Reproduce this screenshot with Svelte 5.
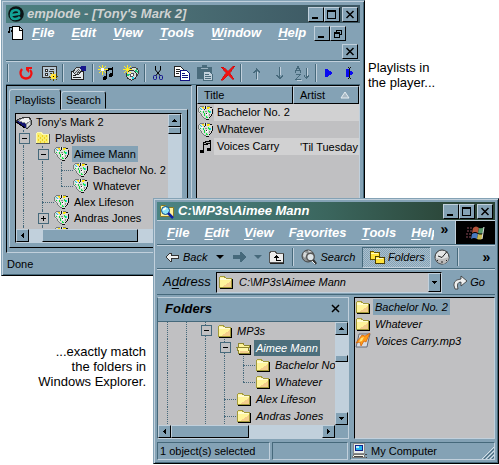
<script>
  const playlists = [
    { g: '', icon: 'device', text: "Tony's Mark 2" },
    { g: 'm', icon: 'yfolder', text: 'Playlists' },
    { g: 'vm', icon: 'discs', text: 'Aimee Mann', sel: true },
    { g: 'vvt', icon: 'discs', text: 'Bachelor No. 2' },
    { g: 'vvl', icon: 'discs', text: 'Whatever' },
    { g: 'vt', icon: 'discs', text: 'Alex Lifeson' },
    { g: 'vp', icon: 'discs', text: 'Andras Jones' },
    { g: 'vt', icon: 'discs', text: '' }
  ];
  const folders = [
    { g: 'vvm', icon: 'folder', text: 'MP3s' },
    { g: 'vvvm', icon: 'open', text: 'Aimee Mann', sel: true },
    { g: 'vvvvt', icon: 'folder', text: 'Bachelor No. 2' },
    { g: 'vvvvl', icon: 'folder', text: 'Whatever' },
    { g: 'vvvt', icon: 'folder', text: 'Alex Lifeson' },
    { g: 'vvvt', icon: 'folder', text: 'Andras Jones' }
  ];
  const tracks = [
    { icon: 'discs', title: 'Bachelor No. 2', artist: '' },
    { icon: 'discs', title: 'Whatever', artist: '' },
    { icon: 'notes', title: 'Voices Carry', artist: "'Til Tuesday" }
  ];
  const files = [
    { icon: 'folder', text: 'Bachelor No. 2', sel: true },
    { icon: 'folder', text: 'Whatever' },
    { icon: 'mp3', text: 'Voices Carry.mp3' }
  ];
  const tools = [
    ['undo', 'Synchronise', 23], ['config', 'Configure', 25], 'sep', ['props', 'Properties', 28], 'sep',
    ['newtune', 'New tune', 23], ['newlist', 'New playlist', 27], 'sep', ['cut', 'Cut', 24], ['copy', 'Copy', 23],
    ['paste', 'Paste', 23], ['del', 'Delete', 24], 'sep', ['up', 'Up', 27], ['down', 'Down', 20], ['sort', 'Sort', 26],
    'sep', ['play', 'Play', 23], ['playto', 'Play from here', 18]
  ];
  const smooth = ['undo', 'mp3', 'emplode', 'search', 'history', 'go', 'finder', 'cut'];
  let address = $state('C:\\MP3s\\Aimee Mann');
</script>

{#snippet icon(name)}
  <svg class="ic" viewBox="0 0 16 16" width="16" height="16" aria-hidden="true" shape-rendering={smooth.includes(name) ? 'auto' : 'crispEdges'}>
    {#if name === 'folder'}
      <path d="M1.500 3.500l1-1h4l1 2h6v9h-12z" fill="#fff49a" stroke="#a39a3a" />
      <path d="M2 4h5l1 1h5v1h-11z" fill="#fffbd0" />
      <path d="M13 7v6h-9z" fill="#f5ce8c" /><path d="M14.500 5v9.500H2" fill="none" stroke="#000" />
    {:else if name === 'open'}
      <path d="M2 13V3h5l1 2h5v3" fill="#fff49a" stroke="#8f8630" />
      <path d="M1 7.500h11l2 6H3z" fill="#fff7a8" stroke="#8f8630" />
      <path d="M4 11h8l1 2H4z" fill="#f5ce8c" /><path d="M14.500 5v9.500H3" fill="none" stroke="#000" />
    {:else if name === 'yfolder'}
      <path d="M1.500 3.500l1-1h4l1 2h6v9h-12z" fill="#f8ee70" stroke="#fdf9b0" />
      <path d="M3 6h1M7 6h1M11 6h1M5 8h1M9 8h1M3 10h1M7 10h1M11 10h1M5 12h1M9 12h1" stroke="#f0d020" stroke-width="2" />
      <path d="M14.500 4v9.500H1" fill="none" stroke="#555" />
    {:else if name === 'discs'}
      <path d="M3 1h9v1h2v2h1v5h-1v2h-2v2h-1v1H7v-1H5v-2H3V9H1V7H0V4h1V2h2z" fill="#dcdfda" />
      <path d="M2 1.500h4M9 1.500h3M1.500 2v1M0.500 3v4M1 7.500h1M2 8.500h1M3.500 9v2M4.500 11v1M5 12.500h1M6 13.500h2" fill="none" stroke="#777c7c" />
      <path d="M12 2.500h2M14.500 4v5M13.500 9v2M12 11.500h1M11.500 12v1M8 14.500h3M7.500 1v3" fill="none" stroke="#101010" />
      <path d="M4 2h2v2H5zM9 2h3v1h-1v1H9z" fill="#ffe100" />
      <path d="M2 3h1v1h1v1H3z" fill="#10d0e8" /><path d="M2 6h1v1H2zM5 6h1v2H5zM6 8h1v3H6z" fill="#10d840" />
      <path d="M3 5h2v1H3zM8 8h2v2H8z" fill="#fff" /><path d="M10 5h1v1h1v2h-1V7h-1z" fill="#18e850" />
      <path d="M8 11h1v1h1v1H8z" fill="#18e850" /><path d="M12 6h1v2h-1z" fill="#20d8e8" />
      <path d="M8 8h1v1H8zM6 4h1v1H6z" fill="#222" /><path d="M11 9h1v2h-1zM7 6h2v1H7z" fill="#8c9090" />
    {:else if name === 'notes'}
      <path d="M5 3l8-2v9h-1V5L6 6.500V12H5z" fill="#000" />
      <path d="M2 11h3v-1h1v4H2zM9 9h3v-1h1v4H9z" fill="#000" /><path d="M6 4.500l6-1.500" stroke="#aaa" />
    {:else if name === 'device'}
      <path d="M0 7l3-2 6-2h4l2 3v5l-3 3h-2L1 9z" fill="#8d9194" stroke="#333" />
      <path d="M3 6l6-2h4l1 3-4 2z" fill="#f1f1f1" /><path d="M1 7l9 3v4L2 9z" fill="#141470" />
      <path d="M11 10l3-2v2l-3 3z" fill="#ddd" /><path d="M0 8l5 3 4 3" stroke="#000" fill="none" />
    {:else if name === 'mp3'}
      <path d="M4 1h11l-2 8-1 5H1l2-8z" fill="#d9dce1" stroke="#666b75" />
      <path d="M1 10l6-8 3 1 5-3-4 9-2-1-3 5-1-4z" fill="#ff9b16" stroke="#d05a00" stroke-width=".7" /><path d="M6 5l3-1-2 4-3 1z" fill="#ffe477" />
    {:else if name === 'emplode'}
      <circle cx="8" cy="8" r="7.800" fill="#0c1416" />
      <path d="M4 9l7-1q1-4-3-4-5 0-5 5 0 4 4 4 3 0 5-2" fill="none" stroke="#13a396" stroke-width="2.500" />
    {:else if name === 'doc'}
      <path d="M4.500 1.500h7l3 3v10h-10z" fill="#fff" stroke="#000" /><path d="M11.500 2v3.500h3" fill="#ddd" stroke="#000" />
      <path d="M1.500 2v6M1 2.500h4M4.500 2v5" stroke="#000" /><path d="M0 7h2M3 6h2" stroke="#000" stroke-width="2" />
    {:else if name === 'undo'}
      <path d="M4 4Q1 8 4 12q4 3 8 0 3-4 0-7" fill="none" stroke="#f01010" stroke-width="2.200" />
      <path d="M8 2h6v2h-3v4L8 5z" fill="#f01010" />
    {:else if name === 'config'}
      <rect x="0.500" y="1.500" width="14" height="11" fill="#b7c8d5" stroke="#333" />
      <path d="M3 4h2v2H3zM3 8h2v2H3z" fill="#fff" stroke="#333" /><path d="M8 4.500h4M7 6.500h5M8 8.500h2" stroke="#333" />
      <path d="M11.500 6v10M7 11.500h9M8 8l7 7M15 8l-7 7" stroke="#5b4c00" stroke-width="1" /><circle cx="11.500" cy="11.500" r="3" fill="#ffe23a" /><path d="M11 11h1v1h-1z" />
    {:else if name === 'props'}
      <path d="M1.500 6.500h12v8h-12z" fill="#e4e9ec" stroke="#222" /><path d="M3 12.500h8M3 10.500h3" stroke="#222" />
      <path d="M3 7l3-4 4-1 2 3-4 5-3-1z" fill="#cfd5d8" stroke="#333" /><path d="M11 1h5v5h-3l-3-2z" fill="#17178c" />
      <path d="M5 8l4-4M7 9l3-4" stroke="#555" />
    {:else if name === 'newtune'}
      <path d="M8 4h2V3h4V2h1v9h-1V5h-3v1H9v8H8z" fill="#000" /><path d="M6 11h3v3H8v1H5v-3h1zM12 8h3v3h-1v1h-3V9h1z" fill="#000" />
      <path d="M4.500 0v10M0 4.500h10M1 1l7 7M8 1L1 8" stroke="#ffec20" /><path d="M3 3h3v3H3z" fill="#fff" />
    {:else if name === 'newlist'}
      <circle cx="11" cy="7" r="4.500" fill="#d8e0d0" stroke="#444" /><circle cx="8.500" cy="10" r="5" fill="#d4dcd8" stroke="#333" />
      <path d="M8 10L4 8v3zM11 6l3-2 1 4z" fill="#18c878" /><path d="M9 11l3 2-3 1z" fill="#20d8e8" /><circle cx="9" cy="10" r="1.500" fill="#fff" stroke="#555" />
      <path d="M4.500 0v9M0 4.500h9M1 1l7 7M8 1L1 8" stroke="#ffec20" />
    {:else if name === 'cut'}
      <path d="M5.500 1v4l5 6M10.500 1v4l-5 6" fill="none" stroke="#000" />
      <rect x="3.500" y="10.500" width="3" height="4" rx="1" fill="none" stroke="#101090" /><rect x="9.500" y="10.500" width="3" height="4" rx="1" fill="none" stroke="#101090" />
    {:else if name === 'copy'}
      <path d="M0.500 1.500h6l3 3v7h-9z" fill="#fff" stroke="#222" /><path d="M2 4.500h4M2 6.500h4M2 8.500h3" stroke="#222" />
      <path d="M6.500 5.500h6l3 3v7h-9z" fill="#fff" stroke="#101080" /><path d="M8 8.500h3M8 10.500h6M8 12.500h6" stroke="#101080" />
    {:else if name === 'paste'}
      <path d="M0 2h5V0h5v2h5v12H0z" fill="#496b7c" /><path d="M4 3h7v1H4z" fill="#9cb2c0" />
      <path d="M6.500 6.500h6l3 3v6h-9z" fill="#c1d0dc" stroke="#496b7c" /><path d="M8 9.500h4M8 11.500h6M8 13.500h6" stroke="#496b7c" />
    {:else if name === 'del'}
      <path d="M1 2h2l5 4 5-5h2l-5 7 4 6h-2L8 10l-5 5H1l5-7z" fill="#f01212" stroke="#c00" stroke-width=".5" />
    {:else if name === 'up'}
      <path d="M8.500 3v11M5 7.500h1v-1h1v-1h1v-1h1v1h1v1h1v1h1" fill="none" stroke="#46697b" /><path d="M9.500 7v8" stroke="#c1d0dc" />
    {:else if name === 'down'}
      <path d="M8.500 2v11M5 10.500h1v1h1v1h1v1h1v-1h1v-1h1v-1h1" fill="none" stroke="#46697b" /><path d="M9.500 2v8" stroke="#c1d0dc" />
    {:else if name === 'sort'}
      <path d="M1 7.500l3-6 3 6M2 5.500h4M2 9.500h4l-4 5h5M12.500 3v10M10 10.500l2.500 3 2.500-3" fill="none" stroke="#46697b" /><path d="M13.500 3v8M3 15.500h5" stroke="#c1d0dc" />
    {:else if name === 'play'}
      <path d="M4 4h2l6 4-6 4H4z" fill="#0a0af0" />
    {:else if name === 'playto'}
      <path d="M5 4h2l6 4-6 4H5z" fill="#0a0af0" /><path d="M7 2h1v1h1V2h1v1H9v10h1v1H9v-1H8v1H7v-1h1V3H7z" fill="#111" />
    {:else if name === 'finder'}
      <path d="M1.500 3.500l1-1h4l1 2h7v9h-13z" fill="#fff3a0" stroke="#8a7a20" />
      <circle cx="6.500" cy="7.500" r="4" fill="#8be4f8" stroke="#0c4a8a" /><path d="M9 10l5 5" stroke="#1020a0" stroke-width="2.500" /><path d="M4 7l3-2" stroke="#fff" stroke-width="2" />
    {:else if name === 'back'}
      <path d="M2 8l4-4h1v2h7v3H7v3H6z" fill="#eef0f0" stroke="#333" />
    {:else if name === 'fwd'}
      <path d="M15 8l-5-5H9v3H2v4h7v3h1z" fill="#46697b" />
    {:else if name === 'parent'}
      <path d="M0.500 4.500l1-2h5l1 2h7v9h-14z" fill="#ececec" stroke="#555" /><path d="M5 8.500h5M6 7.500h3M7 6.500h1M7.500 7v4.500H12" fill="none" stroke="#000" /><path d="M14.500 5v9.500H1" fill="none" stroke="#222" />
    {:else if name === 'search'}
      <circle cx="7" cy="7" r="6" fill="#8d9192" stroke="#444" /><path d="M3 3l3 1-2 5-2-2zM7 1l4 2-3 1z" fill="#d5d8d9" />
      <circle cx="9.500" cy="8" r="3.800" fill="#dfe5e8" stroke="#555" stroke-width="1.400" /><path d="M12 11l3 4" stroke="#333" stroke-width="2.500" /><path d="M11 12l3 3" stroke="#eee" />
    {:else if name === 'folders'}
      <path d="M1.500 2.500h3l1 1h5v7h-9z" fill="#ffe33c" stroke="#675500" /><path d="M6.500 7.500h3l1 1h5v6h-9z" fill="#ffe33c" stroke="#4c3e00" /><path d="M2 4.500h7M7 9.500h7" stroke="#fffbc0" />
    {:else if name === 'history'}
      <circle cx="8" cy="8" r="7" fill="#e4e5e5" stroke="#333" /><path d="M1 9l7 1 7-2-1 4-4 3-5-1z" fill="#bbb" /><path d="M8 8.500l5-6M8 8.500L4 7" stroke="#222" />
      <path d="M4 11l-1 1M8 12v2M12 11l1 1" stroke="#222" />
    {:else if name === 'go'}
      <path d="M3 15q-4-9 6-10V2l6 5-6 5V8q-5 0-3 7z" fill="#eef0f0" stroke="#333" stroke-width=".8" />
    {:else if name === 'computer'}
      <path d="M2.500 0.500h11v10h-11z" fill="#e8eeee" stroke="#888" /><path d="M4.500 2.500h7v5h-7z" fill="#23b5ee" stroke="#10208a" /><path d="M5 3h3v2H5z" fill="#bff4ff" />
      <path d="M2.500 11.500h10l2 3h-13z" fill="#f8f6ea" stroke="#777" /><path d="M3 13.500h9M14 11.500h2M15 14.500h1" stroke="#444" />
    {/if}
  </svg>
{/snippet}

{#snippet tree(rows)}
  <ul class="tree">
    {#each rows as row}
      <li>
        {#each row.g as g}<span class="g {g}"></span>{/each}
        {@render icon(row.icon)}<span class="label" class:sel={row.sel}>{row.text}</span>
      </li>
    {/each}
  </ul>
{/snippet}

{#snippet winButtons(last)}
  <div class="wbtns">
    <button aria-label="Minimize"><svg width="10" height="9" shape-rendering="crispEdges"><path d="M1 8h6" stroke="#000" stroke-width="2" /></svg></button>
    {#if last === 'restore'}
      <button aria-label="Restore"><svg width="10" height="9" shape-rendering="crispEdges"><path d="M3.500 3V1.500h5v4H7M3 1h6" fill="none" stroke="#000" /><path d="M1.500 3.500h5v5h-5zM1 4h6" fill="none" stroke="#000" /></svg></button>
    {:else}
      <button aria-label="Maximize"><svg width="10" height="9" shape-rendering="crispEdges"><path d="M0.500 1v7.500h8V1" fill="none" stroke="#000" /><path d="M0 1h9" stroke="#000" stroke-width="2" /></svg></button>
      {@render closeButton('Close')}
    {/if}
  </div>
{/snippet}

{#snippet closeButton(label)}
  <button class="wclose" aria-label={label}><svg width="10" height="9"><path d="M1.500 1l7 7M8.500 1l-7 7" stroke="#000" stroke-width="1.500" /></svg></button>
{/snippet}

{#snippet arrow(dir)}
  <button class="sbtn" aria-label="Scroll {dir}"><svg width="7" height="7" viewBox="0 0 7 7" shape-rendering="crispEdges"><path d={{ up: 'M1 5h5V4H5V3H4V2H3v1H2v1H1z', down: 'M1 2h5v1H5v1H4v1H3V4H2V3H1z', left: 'M5 1v5H4V5H3V4H2V3h1V2h1V1z', right: 'M2 1v5h1V5h1V4h1V3H4V2H3V1z' }[dir]} /></svg></button>
{/snippet}

<main>
  <section class="win player" aria-label="emplode">
    <header class="title">{@render icon('emplode')}<h1>emplode - [Tony's Mark 2]</h1>{@render winButtons('close')}</header>
    <nav class="menu">
      {@render icon('doc')}
      <div class="items"><button><u>F</u>ile</button><button><u>E</u>dit</button><button><u>V</u>iew</button><button><u>T</u>ools</button><button><u>W</u>indow</button><button><u>H</u>elp</button></div>
      {@render winButtons('restore')}
      <div class="second">{@render closeButton('Close document')}</div>
    </nav>
    <div class="tools">
      <i class="sep"></i>
      {#each tools as t}
        {#if t === 'sep'}<i class="sep"></i>{:else}<button aria-label={t[1]} style="width: {t[2]}px">{@render icon(t[0])}</button>{/if}
      {/each}
    </div>
    <div class="body">
      <div class="sunk left">
        <div class="tabs" role="tablist"><button role="tab" aria-selected="true" class="on">Playlists</button><button role="tab" aria-selected="false">Search</button></div>
        <div class="page">
          <div class="well">
            <div class="row">
              {@render tree(playlists)}
              <div class="vs">{@render arrow('up')}<b class="thumb"></b></div>
            </div>
            <div class="hs">{@render arrow('left')}<b class="thumb"></b></div>
          </div>
        </div>
      </div>
      <div class="sunk right">
        <table>
          <thead><tr><th>Title</th><th>Artist <svg width="10" height="8"><path d="M1 7l4-6 4 6z" fill="#a9b9c4" stroke="#e5edf2" /></svg></th></tr></thead>
          <tbody>
            {#each tracks as t}
              <tr><td><div class="cell">{@render icon(t.icon)}<span>{t.title}</span></div></td><td>{t.artist}</td></tr>
            {/each}
          </tbody>
        </table>
      </div>
    </div>
    <footer>Done</footer>
  </section>

  <p class="note one">Playlists in<br />the player...</p>
  <p class="note two">...exactly match<br />the folders in<br />Windows Explorer.</p>

  <section class="win explorer" aria-label="Windows Explorer">
    <header class="title">{@render icon('finder')}<h2>C:\MP3s\Aimee Mann</h2>{@render winButtons('close')}</header>
    <nav class="menu">
      <div class="items"><button><u>F</u>ile</button><button><u>E</u>dit</button><button><u>V</u>iew</button><button>F<u>a</u>vorites</button><button><u>T</u>ools</button><button class="cut"><u>H</u>elp</button></div>
      <button class="more" aria-label="More menus">»</button>
      <div class="logo">
        <svg width="20" height="18" viewBox="0 0 20 18"><path d="M7 4q3-3 6 0l-1 5q-3-2-6 0z" fill="#b5533a" /><path d="M13 4q3 1 5-1l-1 6q-3 1-5 0z" fill="#5a9a6a" /><path d="M6 10q3-2 6 0l-1 5q-3-2-6 0z" fill="#4878c0" /><path d="M12 10q3 1 5 0l-1 5q-2 1-5 0z" fill="#c8b850" /><path d="M18 3l-2 12" stroke="#ddd" /><path d="M1 4h2M4 4h2M1 7h2M4 7h2M0 10h2M3 10h2M0 13h2M3 13h2" stroke="#8a4a58" /></svg>
      </div>
    </nav>
    <div class="tools">
      <button class="back">{@render icon('back')}Back</button><i class="caret"></i>
      <button class="fwd" aria-label="Forward">{@render icon('fwd')}</button><i class="caret dim"></i>
      <button class="par" aria-label="Up one level">{@render icon('parent')}</button><i class="sep"></i>
      <button class="find">{@render icon('search')}Search</button>
      <button class="fold" aria-pressed="true">{@render icon('folders')}Folders</button>
      <button aria-label="History">{@render icon('history')}</button><i class="sep"></i>
      <button class="more" aria-label="More tools">»</button>
    </div>
    <div class="addr">
      <label for="address">A<u>d</u>dress</label>
      <div class="combo">{@render icon('folder')}<input id="address" bind:value={address} />{@render arrow('down')}</div>
      <button class="go">{@render icon('go')}Go</button>
    </div>
    <div class="body">
      <div class="pane">
        <div class="phead"><h3>Folders</h3><button aria-label="Close folders"><svg width="9" height="9"><path d="M1 1l7 7M8 1L1 8" stroke="#000" stroke-width="1.500" /></svg></button></div>
        <div class="row">
          {@render tree(folders)}
          <div class="vs">{@render arrow('up')}<b class="thumb"></b>{@render arrow('down')}</div>
        </div>
        <div class="hs">{@render arrow('left')}<b class="thumb"></b>{@render arrow('right')}</div>
      </div>
      <ul class="files">
        {#each files as f}<li>{@render icon(f.icon)}<span class="label" class:sel={f.sel}>{f.text}</span></li>{/each}
      </ul>
    </div>
    <footer>
      <span class="count">1 object(s) selected</span><span class="empty"></span>
      <span class="place">{@render icon('computer')}My Computer<svg class="grip" width="12" height="12"><path d="M0 12L12 0M4 12l8-8M8 12l4-4" stroke="#d5e0e8" /><path d="M2 12L12 2M6 12l6-6M10 12l2-2" stroke="#46697b" /></svg></span>
    </footer>
  </section>
</main>

<style>
  :global(body) { background: #fff; }
  main {
    --face: #84a2b5; --hi: #c1d0dc; --lo: #46697b; --gray: #c0c0c2;
    position: relative; min-height: 465px; overflow: hidden;
    font: 11px/16px "Liberation Sans", Arial, sans-serif; color: #000;
  }
  * { box-sizing: border-box; }
  button { font: inherit; color: inherit; background: none; border: 0; padding: 0; margin: 0; display: flex; align-items: center; justify-content: center; flex: none; }
  h1, h2, h3, p, ul { margin: 0; padding: 0; list-style: none; }
  .ic { display: block; flex: none; }
  u { text-underline-offset: 2px; }

  .win { position: absolute; display: flex; flex-direction: column; background: var(--face); border: 1px solid var(--face); border-right-color: #000; border-bottom-color: #000; box-shadow: inset 1px 1px var(--hi), inset -1px -1px var(--lo); }
  .player { left: 1px; top: 0; width: 364px; height: 276px; padding: 4px; }
  .explorer { left: 153px; right: 0; top: 198px; height: 266px; padding: 3px; font-style: italic; }
  .title { display: flex; align-items: center; height: 18px; padding: 0 2px; flex: none; background: linear-gradient(90deg, #4c8080, #4b6f75 45%, #3f5c66 85%, #3c5662); }
  .explorer .title { background: linear-gradient(90deg, #4b8484, #3b665e 50%, #2a4436 90%); }
  .title h1, .title h2 { flex: 1; font: italic bold 13px/18px "Liberation Sans", Arial, sans-serif; color: #cfd2d2; padding-left: 3px; white-space: nowrap; }
  .explorer .title h2 { color: #fff; }
  .wbtns { display: flex; flex: none; }
  .wbtns button, .wclose { width: 16px; height: 15px; background: var(--face); border: 1px solid; border-color: var(--hi) #000 #000 var(--hi); }
  .wbtns .wclose { margin-left: 2px; }

  .menu { display: flex; align-items: center; font: italic bold 13px/18px "Liberation Sans", Arial, sans-serif; color: #fff; flex: none; }
  .items { display: flex; gap: 15px; }
  .player .menu { flex-wrap: wrap; align-content: flex-start; height: 38px; padding: 1px 2px 0; border-bottom: 1px solid var(--lo); }
  .player .items { gap: 17px; padding-left: 8px; flex: 1; }
  .player .menu .wbtns { margin-right: 12px; }
  .second { width: 100%; display: flex; justify-content: flex-end; padding-top: 2px; }

  .tools { display: flex; align-items: center; flex: none; height: 24px; border-top: 1px solid var(--hi); border-bottom: 1px solid var(--lo); }
  .player .tools { padding-left: 1px; }
  .sep { width: 2px; height: 18px; flex: none; border-left: 1px solid var(--lo); border-right: 1px solid var(--hi); }
  .player .tools .sep:first-child { margin-right: 5px; }

  .player .body { display: flex; flex: 1; gap: 4px; min-height: 0; }
  .sunk { border: 1px solid; border-color: #000 var(--hi) var(--hi) #000; min-width: 0; }
  .left { width: 186px; display: flex; flex-direction: column; padding: 2px 3px 4px 2px; }
  .tabs { display: flex; align-items: flex-end; height: 21px; }
  .tabs button { width: 45px; height: 18px; border: 1px solid; border-color: var(--hi) #000 transparent var(--hi); border-radius: 3px 3px 0 0; }
  .tabs .on { width: 52px; height: 21px; position: relative; margin-bottom: -1px; background: var(--face); border-bottom-color: var(--face); }
  .page { flex: 1; min-height: 0; display: flex; padding: 3px 5px 4px; border: 1px solid; border-color: var(--hi) #000 #000 var(--hi); }
  .well { flex: 1; min-width: 0; display: flex; flex-direction: column; background: var(--gray); border: 1px solid; border-color: #000 var(--hi) var(--hi) #000; }
  .row { display: flex; flex: 1; min-height: 0; }

  .tree { flex: 1; min-width: 0; overflow: hidden; white-space: nowrap; }
  .tree li { display: flex; height: 16px; align-items: center; }
  .explorer .tree li, .files li { height: 17px; }
  .label { padding: 0 2px; margin-left: 2px; line-height: 16px; white-space: nowrap; }
  .sel { background: var(--face); }
  .tree .g { align-self: stretch; width: 19px; flex: none; display: grid; grid-template: 1fr 1fr / 7px 12px; }
  .g::before, .g::after { content: ""; }
  .g::before { grid-area: 1 / 2 / 3; border-left: 1px dotted var(--lo); }
  .g.l::before { grid-area: 1 / 2 / 2; }
  .g.t::after, .g.l::after { grid-area: 2 / 2; border-top: 1px dotted var(--lo); }
  .g.m::after, .g.p::after { grid-area: 1 / 1 / 3 / 3; align-self: center; margin-left: 3px; width: 9px; height: 9px; border: 1px solid var(--lo); background: linear-gradient(#000, #000) center / 5px 1px no-repeat, var(--gray); }
  .g.p::after { background: linear-gradient(#000, #000) center / 5px 1px no-repeat, linear-gradient(#000, #000) center / 1px 5px no-repeat, var(--gray); }

  .vs, .hs { display: flex; flex: none; background: var(--hi); }
  .vs { width: 13px; flex-direction: column; }
  .hs { height: 13px; }
  .sbtn, .thumb { background: var(--face); border: 1px solid; border-color: var(--hi) #000 #000 var(--hi); flex: none; }
  .sbtn { width: 13px; height: 13px; }
  .player .vs .thumb { height: 7px; }
  .player .hs .thumb { width: 96px; margin-left: 13px; }

  .right { flex: 1; background: var(--gray); }
  table { width: 100%; border-collapse: separate; border-spacing: 0; table-layout: fixed; }
  th { height: 18px; padding: 0 0 0 6px; text-align: left; font-weight: normal; font-size: 11px; background: var(--face); border: 1px solid; border-color: var(--hi) #000 #000 var(--hi); }
  th:first-child { width: 96px; }
  th svg { margin-left: 12px; }
  td { height: 17px; padding: 0 0 0 7px; white-space: nowrap; overflow: hidden; }
  td:first-child { padding: 0 0 0 1px; }
  .cell { display: flex; align-items: center; }
  .cell span { flex: 1; padding-left: 3px; line-height: 17px; }
  tbody tr:nth-child(odd) td:last-child, tbody tr:nth-child(odd) .cell span { background: #d1d1d2; }
  .player footer { flex: none; height: 18px; line-height: 22px; padding-left: 1px; }

  .note { position: absolute; font-size: 13px; line-height: 15px; white-space: nowrap; }
  .one { left: 368px; top: 60px; }
  .two { right: 353px; top: 344px; text-align: right; }

  .explorer .menu { height: 25px; border-top: 1px solid var(--hi); border-bottom: 1px solid var(--lo); }
  .explorer .items { padding-left: 10px; flex: 1; min-width: 0; overflow: hidden; }
  .explorer .cut { min-width: 0; flex: 0 1 23px; overflow: hidden; justify-content: flex-start; }
  .more { width: 9px; font: bold 14px/16px "Liberation Sans", Arial, sans-serif; color: #000; }
  .menu .more { align-self: flex-start; margin: 0 6px 0 4px; }
  .logo { width: 40px; height: 23px; background: #000; display: flex; align-items: center; justify-content: center; border-left: 1px solid var(--hi); }
  .explorer .tools { padding-left: 7px; }
  .tools .back { gap: 3px; padding-right: 9px; }
  .caret { border: 4px solid transparent; border-top-color: #000; border-bottom: 0; }
  .caret.dim { border-top-color: var(--lo); }
  .fwd { padding: 0 7px; }
  .par { padding: 0 7px; }
  .find { gap: 3px; padding: 0 7px; }
  .fold { gap: 3px; width: 69px; height: 21px; border: 1px solid; border-color: var(--lo) var(--hi) var(--hi) var(--lo); background: repeating-conic-gradient(#84a2b5 0 25%, #abbfcd 0 50%) 0 0 / 2px 2px; margin-right: 3px; }
  .explorer .tools .sep:last-of-type { margin-left: 7px; margin-right: auto; }
  .tools .more { margin-right: 4px; }
  .addr { display: flex; align-items: center; height: 26px; flex: none; border-top: 1px solid var(--hi); border-bottom: 1px solid var(--lo); }
  .addr label { width: 59px; padding-left: 6px; font-size: 13px; flex: none; }
  .combo { flex: 1; min-width: 0; height: 21px; display: flex; align-items: center; background: var(--gray); border: 1px solid; border-color: #000 var(--hi) var(--hi) #000; padding-left: 1px; }
  .combo input { flex: 1; min-width: 0; border: 0; padding: 0 0 0 5px; background: none; font: inherit; color: inherit; outline: 0; }
  .combo .sbtn { height: 19px; }
  .go { width: 53px; gap: 2px; }

  .explorer .body { display: flex; flex: 1; min-height: 0; gap: 5px; padding-top: 2px; }
  .pane { width: 192px; display: flex; flex-direction: column; border: 1px solid; border-color: var(--hi) var(--hi) var(--hi) var(--lo); }
  .phead { display: flex; justify-content: space-between; align-items: center; flex: none; height: 24px; padding: 0 8px 2px 7px; border-bottom: 1px solid var(--lo); }
  h3 { font-size: 13px; }
  .explorer .tree { background: var(--gray); padding-left: 2px; }
  .pane .sel { background: #4c6f7c; color: #fff; }
  .explorer .vs .thumb { height: 7px; margin: 20px 0 auto; }
  .explorer .hs .thumb { width: 78px; margin-right: auto; }
  .explorer .hs { padding-right: 13px; background: linear-gradient(var(--face), var(--face)) right / 13px 100% no-repeat, var(--hi); }
  .files { flex: 1; min-width: 0; background: var(--gray); border: 1px solid; border-color: #000 var(--hi) var(--hi) #000; }
  .files li { display: flex; align-items: center; }
  .explorer footer { display: flex; flex: none; gap: 2px; height: 21px; padding-top: 3px; font-style: normal; line-height: 16px; }
  footer span { border: 1px solid; border-color: var(--lo) var(--hi) var(--hi) var(--lo); }
  .count { width: 113px; padding-left: 2px; }
  .empty { width: 76px; }
  .place { flex: 1; display: flex; align-items: center; gap: 4px; }
  .grip { margin-left: auto; align-self: flex-end; }
</style>
